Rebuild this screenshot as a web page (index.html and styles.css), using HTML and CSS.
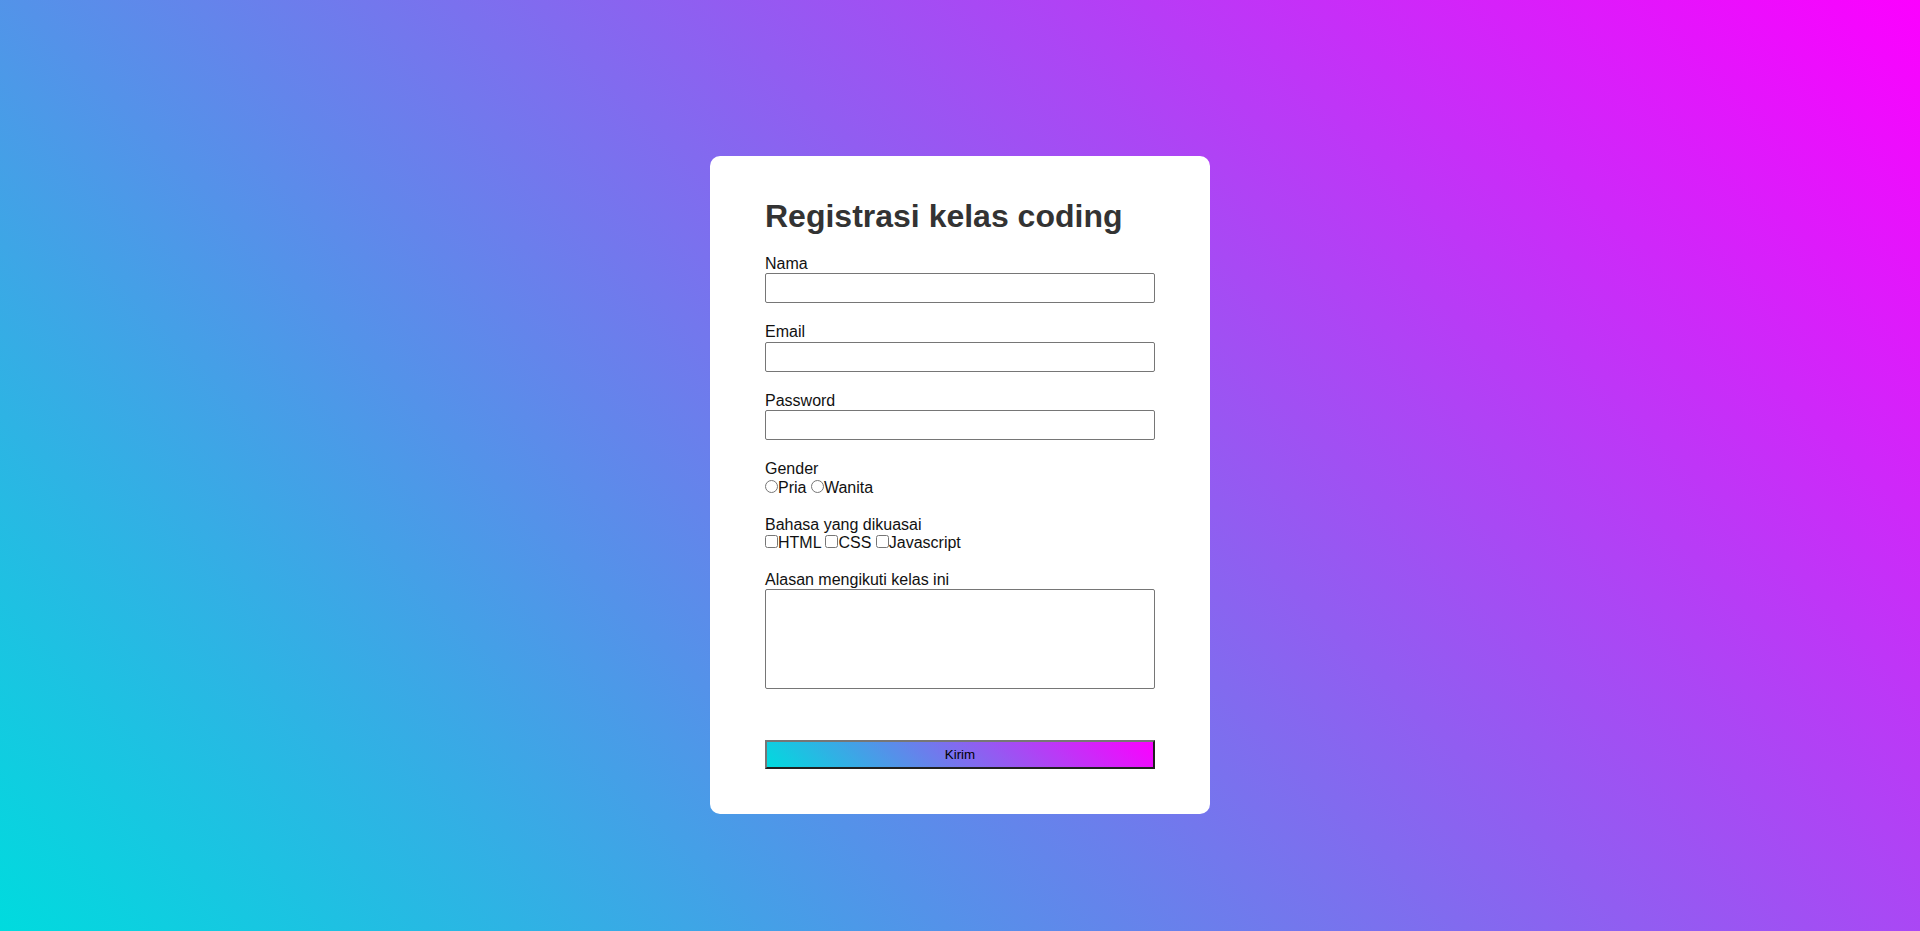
FILE: index.html
```html
<!DOCTYPE html>
<html lang="id">
<head>
<meta charset="utf-8">
<title>Registrasi kelas coding</title>
<link rel="stylesheet" href="styles.css">
</head>
<body>
  <main class="card">
    <h1 class="title">Registrasi kelas coding</h1>
    <form class="form">
      <div class="field">
        <label class="label" for="nama">Nama</label>
        <input class="text-input" type="text" id="nama">
      </div>
      <div class="field">
        <label class="label" for="email">Email</label>
        <input class="text-input" type="email" id="email">
      </div>
      <div class="field">
        <label class="label" for="password">Password</label>
        <input class="text-input" type="password" id="password">
      </div>
      <div class="field">
        <span class="label">Gender</span>
        <div class="options"><input class="choice" type="radio" name="gender" id="pria"><label for="pria">Pria</label> <input class="choice" type="radio" name="gender" id="wanita"><label for="wanita">Wanita</label></div>
      </div>
      <div class="field">
        <span class="label">Bahasa yang dikuasai</span>
        <div class="options"><input class="choice" type="checkbox" id="html"><label for="html">HTML</label> <input class="choice" type="checkbox" id="css"><label for="css">CSS</label> <input class="choice" type="checkbox" id="js"><label for="js">Javascript</label></div>
      </div>
      <div class="field field-last">
        <label class="label" for="alasan">Alasan mengikuti kelas ini</label>
        <textarea class="textarea" id="alasan"></textarea>
      </div>
      <button class="submit" type="submit">Kirim</button>
    </form>
  </main>
</body>
</html>
```

FILE: styles.css
```css
html {
  min-height: 100%;
  background: linear-gradient(45deg, #00dbde, #fc00ff);
}

body {
  margin: 0;
  min-height: 100vh;
  box-sizing: border-box;
  padding-top: 156px;
  font-family: "Liberation Sans", Arial, sans-serif;
  font-size: 16px;
  color: #111;
}

.card {
  width: 500px;
  box-sizing: border-box;
  margin: 0 auto;
  padding: 21px 55px 45px;
  background: #fff;
  border-radius: 10px;
}

.title {
  margin: 21px 0 20px;
  font-size: 32px;
  font-weight: bold;
  color: #333;
}

.form {
  display: block;
}

.field {
  margin-bottom: 20px;
}

.field-last {
  margin-bottom: 0;
}

.label {
  display: block;
  line-height: 18.4px;
}

.text-input {
  display: block;
  width: 100%;
  height: 30px;
  box-sizing: border-box;
  margin: 0;
  border: 1px solid #767676;
  border-radius: 2px;
  background: #fff;
}

.options {
  line-height: 17px;
  height: 17px;
}

.choice {
  margin: 0;
}

.textarea {
  display: block;
  width: 100%;
  height: 100px;
  box-sizing: border-box;
  margin: 0;
  border: 1px solid #767676;
  border-radius: 2px;
  resize: none;
}

.submit {
  display: block;
  width: 100%;
  height: 29px;
  margin-top: 51px;
  border: 2px outset #767676;
  background: linear-gradient(45deg, #00dbde, #fc00ff);
  font-family: "Liberation Sans", Arial, sans-serif;
  font-size: 13.333px;
  color: #000;
  cursor: pointer;
}
```
